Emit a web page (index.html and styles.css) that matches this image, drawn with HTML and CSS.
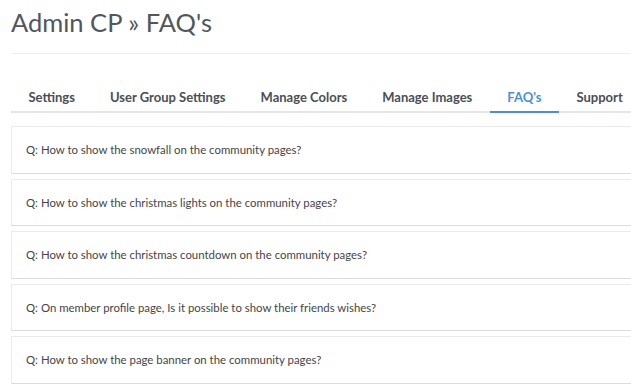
FILE: index.html
```html
<!DOCTYPE html>
<html lang="en">
<head>
    <meta charset="UTF-8">
    <meta name="viewport" content="width=device-width, initial-scale=1.0">
    <title>Admin CP - FAQ's</title>
    <link rel="stylesheet" href="styles.css">
</head>
<body>
    <div class="page">
        <h1 class="pageTitle">Admin CP &raquo; FAQ's</h1>
        <div class="rule"></div>

        <ul class="tabs">
            <li><a href="#">Settings</a></li>
            <li><a href="#">User Group Settings</a></li>
            <li><a href="#">Manage Colors</a></li>
            <li><a href="#">Manage Images</a></li>
            <li><a class="active" href="#">FAQ's</a></li>
            <li><a href="#">Support</a></li>
        </ul>

        <ul class="faqList">
            <li>Q: How to show the snowfall on the community pages?</li>
            <li>Q: How to show the christmas lights on the community pages?</li>
            <li>Q: How to show the christmas countdown on the community pages?</li>
            <li>Q: On member profile page, Is it possible to show their friends wishes?</li>
            <li>Q: How to show the page banner on the community pages?</li>
        </ul>
    </div>
</body>
</html>
```

FILE: styles.css
```css
body {
    margin: 0;
    overflow: hidden;
    background-color: #fff;
    font-family: Lato, "Open Sans", sans-serif;
    color: #444;
}

.page {
    width: 700px;
    padding-left: 11px;
}

.pageTitle {
    margin: 0;
    padding-top: 6px;
    font-size: 25.5px;
    font-weight: normal;
    line-height: 32px;
    color: #50575c;
}

.rule {
    margin-top: 15px;
    height: 1px;
    background-color: #eee;
}

.tabs {
    display: flex;
    margin: 27px 0 0;
    padding: 0;
    list-style: none;
    border-bottom: 2px solid #e1e7ea;
}

.tabs a {
    display: block;
    padding: 8px 17.5px 6px;
    margin-bottom: -2px;
    font-size: 13px;
    line-height: 16px;
    font-weight: bold;
    color: #4a4f53;
    text-decoration: none;
    border-bottom: 2px solid transparent;
}

.tabs a.active {
    color: #4a8fd8;
    border-bottom-color: #4a8fd8;
}

.faqList {
    display: flex;
    flex-direction: column;
    gap: 5px;
    margin: 13px 0 0;
    padding: 0;
    list-style: none;
}

.faqList li {
    display: flex;
    align-items: center;
    height: 45.5px;
    padding: 0 14px;
    font-size: 11.4px;
    color: #454545;
    border: 1px solid #ebebeb;
    border-bottom-color: #dcdcdc;
}
```
